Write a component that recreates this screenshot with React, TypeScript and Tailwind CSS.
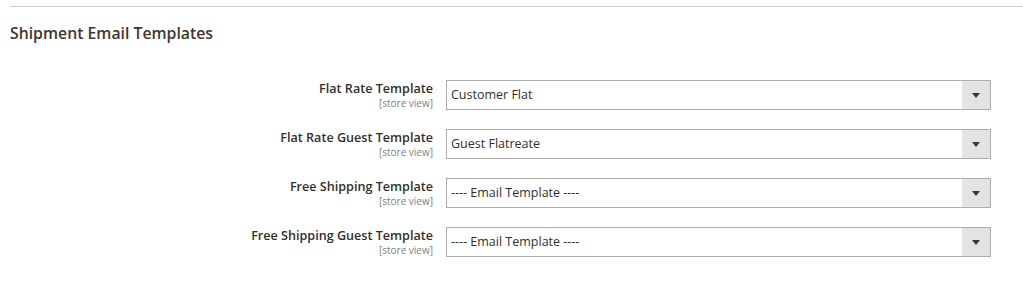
const rows = [
  { label: "Flat Rate Template", value: "Customer Flat" },
  { label: "Flat Rate Guest Template", value: "Guest Flatreate" },
  { label: "Free Shipping Template", value: "---- Email Template ----" },
  { label: "Free Shipping Guest Template", value: "---- Email Template ----" },
]

const App = () => {
  return (
    <div className="w-[1023px] h-[305px] bg-white pt-[6px] text-[#303030]" style={{ fontFamily: '"Open Sans", sans-serif' }}>
      <div className="ml-[10px] h-[1px] bg-[#cccccc]" />
      <h2 className="ml-[10px] mt-[15px] text-[15.8px] leading-[22px] font-semibold text-[#41362f]">
        Shipment Email Templates
      </h2>
      <div className="mt-[36px] flex flex-col gap-[19px]">
        {rows.map((row) => (
          <div key={row.label} className="flex items-start">
            <div className="w-[433px] pt-[1px] text-right">
              <div className="text-[12.6px] leading-[16px] font-semibold text-[#303030]">{row.label}</div>
              <div className="text-[10px] leading-[12px] text-[#808080]">[store view]</div>
            </div>
            <div className="ml-[13px] flex h-[30px] w-[545px] border border-[#adadad] bg-white">
              <div className="flex-1 pl-[4px] text-[12.5px] leading-[28px] text-[#303030]">{row.value}</div>
              <div className="flex w-[28px] items-center justify-center bg-[#e3e3e3]">
                <svg width="8" height="5" viewBox="0 0 8 5">
                  <path d="M0 0H8L4 5Z" fill="#41362f" />
                </svg>
              </div>
            </div>
          </div>
        ))}
      </div>
    </div>
  )
}

export default App
